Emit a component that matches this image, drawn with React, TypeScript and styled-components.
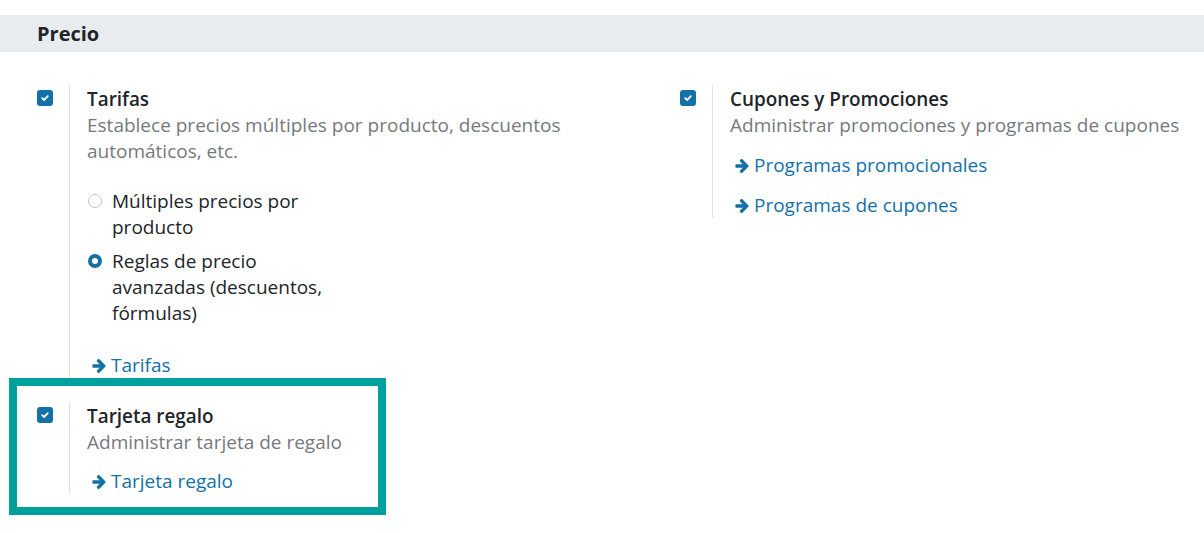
import React from "react";
import styled, { createGlobalStyle } from "styled-components";

const GlobalStyle = createGlobalStyle`
  html, body {
    margin: 0;
    padding: 0;
    background: #ffffff;
  }
  body {
    font-family: "Open Sans", "Liberation Sans", sans-serif;
    color: #212529;
    -webkit-font-smoothing: antialiased;
  }
`;

const Page = styled.div`
  padding-top: 15px;
  width: 1204px;
  height: 533px;
  box-sizing: border-box;
  overflow: hidden;
`;

const SectionHeader = styled.div`
  height: 37px;
  background: #e9ecef;
  padding-left: 37px;
  font-size: 20px;
  font-weight: 700;
  line-height: 37px;
  color: #212529;
`;

const Grid = styled.div`
  display: grid;
  grid-template-columns: 643px 1fr;
  padding-left: 9px;
  margin-top: 33px;
  align-items: start;
`;

const Column = styled.div`
  display: flex;
  flex-direction: column;
  align-items: flex-start;
`;

const SettingBox = styled.div<{ $highlight?: boolean }>`
  display: flex;
  box-sizing: border-box;
  ${(p) =>
    p.$highlight
      ? `
    width: 377px;
    border: 8px solid #00a09d;
    padding: 16px 0 13px 20px;
  `
      : `
    padding-left: 28px;
  `}
`;

const LeftPane = styled.div`
  width: 32px;
  flex: none;
  padding-top: 5px;
`;

const RightPane = styled.div`
  border-left: 1px solid #dee2e6;
  padding: 1px 10px 0 17px;
  display: flex;
  flex-direction: column;
  align-items: flex-start;
`;

const CheckBox = styled.span`
  display: flex;
  align-items: center;
  justify-content: center;
  width: 16px;
  height: 16px;
  border-radius: 3px;
  background: #1471a8;
`;

const Title = styled.div`
  font-size: 18.9px;
  font-weight: 600;
  line-height: 26px;
  color: #212529;
`;

const Description = styled.div<{ $maxWidth?: number }>`
  font-size: 19px;
  line-height: 26px;
  color: #76797d;
  max-width: ${(p) => (p.$maxWidth ? `${p.$maxWidth}px` : "none")};
`;

const RadioGroup = styled.div`
  display: flex;
  flex-direction: column;
  gap: 8px;
  margin-top: 24px;
`;

const RadioRow = styled.label`
  display: flex;
  align-items: flex-start;
  gap: 10px;
  width: 250px;
  font-size: 19px;
  line-height: 26px;
  color: #212529;
`;

const RadioDot = styled.span<{ $checked?: boolean }>`
  flex: none;
  width: 14px;
  height: 14px;
  margin-top: 6px;
  margin-left: 1px;
  box-sizing: border-box;
  border-radius: 50%;
  ${(p) =>
    p.$checked
      ? `border: 4px solid #1471a8; background: #ffffff;`
      : `border: 1px solid #bfc3c7; background: #ffffff;`}
`;

const Link = styled.a<{ $mt: number }>`
  display: flex;
  align-items: center;
  gap: 5px;
  margin-top: ${(p) => p.$mt}px;
  margin-left: 5px;
  font-size: 19px;
  line-height: 26px;
  color: #1471a8;
  text-decoration: none;
  cursor: pointer;
`;

const ArrowIcon = styled.svg`
  width: 14px;
  height: 14px;
  flex: none;
  margin-top: 1px;
`;

const Check = () => (
  <svg width="10" height="10" viewBox="0 0 10 10">
    <path
      d="M2.2 5.2 L4.1 7 L7.8 3.2"
      fill="none"
      stroke="#ffffff"
      strokeWidth="1.8"
      strokeLinecap="round"
      strokeLinejoin="round"
    />
  </svg>
);

const Arrow = () => (
  <ArrowIcon viewBox="128 181 1472 1558">
    <path
      fill="#1471a8"
      d="M1600 960q0 54-37 91l-651 651q-39 37-91 37-51 0-90-37l-75-75q-38-38-38-91t38-91l293-293h-704q-52 0-84.5-37.5t-32.5-90.5v-128q0-53 32.5-90.5t84.5-37.5h704l-293-294q-38-36-38-90t38-90l75-75q38-38 90-38 53 0 91 38l651 651q37 35 37 90z"
    />
  </ArrowIcon>
);

const ArrowLink = ({ mt, children }: { mt: number; children: React.ReactNode }) => (
  <Link $mt={mt}>
    <Arrow />
    <span>{children}</span>
  </Link>
);

export default function App() {
  return (
    <Page>
      <GlobalStyle />
      <SectionHeader>Precio</SectionHeader>
      <Grid>
        <Column>
          <SettingBox>
            <LeftPane>
              <CheckBox>
                <Check />
              </CheckBox>
            </LeftPane>
            <RightPane>
              <Title>Tarifas</Title>
              <Description $maxWidth={520}>
                Establece precios múltiples por producto, descuentos automáticos, etc.
              </Description>
              <RadioGroup>
                <RadioRow>
                  <RadioDot />
                  <span>Múltiples precios por producto</span>
                </RadioRow>
                <RadioRow>
                  <RadioDot $checked />
                  <span>Reglas de precio avanzadas (descuentos, fórmulas)</span>
                </RadioRow>
              </RadioGroup>
              <ArrowLink mt={26}>Tarifas</ArrowLink>
            </RightPane>
          </SettingBox>
          <SettingBox $highlight>
            <LeftPane>
              <CheckBox>
                <Check />
              </CheckBox>
            </LeftPane>
            <RightPane>
              <Title>Tarjeta regalo</Title>
              <Description>Administrar tarjeta de regalo</Description>
              <ArrowLink mt={13}>Tarjeta regalo</ArrowLink>
            </RightPane>
          </SettingBox>
        </Column>
        <Column>
          <SettingBox>
            <LeftPane>
              <CheckBox>
                <Check />
              </CheckBox>
            </LeftPane>
            <RightPane>
              <Title>Cupones y Promociones</Title>
              <Description>Administrar promociones y programas de cupones</Description>
              <ArrowLink mt={14}>Programas promocionales</ArrowLink>
              <ArrowLink mt={14}>Programas de cupones</ArrowLink>
            </RightPane>
          </SettingBox>
        </Column>
      </Grid>
    </Page>
  );
}
